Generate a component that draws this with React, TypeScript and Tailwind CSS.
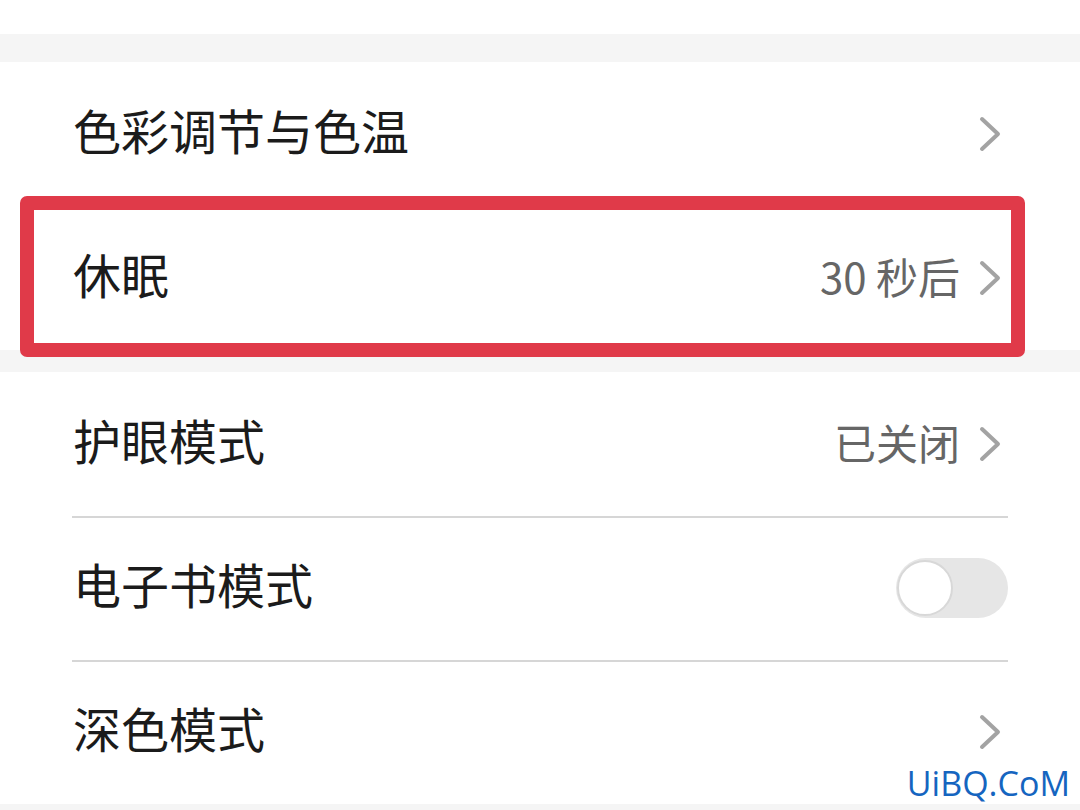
import React from 'react'

const font = { fontFamily: '"Noto Sans CJK SC", "Noto Sans", sans-serif' }

const Chevron = () => (
    <svg width="24" height="36" viewBox="0 0 24 36" fill="none" className="shrink-0">
        <path d="M4 3 L20 18 L4 33" stroke="#a3a3a3" strokeWidth="4" strokeLinecap="round" strokeLinejoin="round" />
    </svg>
)

type RowProps = {
    label: string
    value?: string
    chevron?: boolean
    toggle?: boolean
    divider?: boolean
    children?: React.ReactNode
}

const Row = ({ label, value, chevron, toggle, divider, children }: RowProps) => (
    <div className="relative h-[144px] flex items-center pl-[73px] pr-[72px]">
        {divider && <div className="absolute top-0 left-[72px] right-[72px] h-[2px] bg-[#d6d6d6]" />}
        <span className="text-[48px] leading-none text-[#1b1b1b] pb-[10px]">{label}</span>
        <div className="ml-auto flex items-center gap-[18px]">
            {value && <span className="text-[42px] leading-none text-[#666666] pb-[4px]">{value}</span>}
            {chevron && <div className="mr-[6px]"><Chevron /></div>}
            {toggle && (
                <div className="w-[112px] h-[60px] rounded-full bg-[#e6e6e6] flex items-center">
                    <div className="w-[56px] h-[56px] rounded-full bg-white border-2 border-[#d8d8d8] ml-[1px]" />
                </div>
            )}
        </div>
        {children}
    </div>
)

export default function App() {
    return (
        <div className="relative w-[1080px] h-[810px] bg-white overflow-hidden" style={font}>
            <div className="h-[34px] bg-white" />
            <div className="h-[28px] bg-[#f5f5f5]" />
            <div className="bg-white">
                <Row label="色彩调节与色温" chevron />
                <Row label="休眠" value="30 秒后" chevron>
                    <div className="absolute left-[20px] right-[55px] top-[-10px] bottom-[-7px] border-[14px] border-[#e03a49] rounded-[7px] z-10" />
                </Row>
            </div>
            <div className="h-[22px] bg-[#f5f5f5]" />
            <div className="bg-white">
                <Row label="护眼模式" value="已关闭" chevron />
                <Row label="电子书模式" toggle divider />
                <Row label="深色模式" chevron divider />
            </div>
            <div className="h-[10px] bg-[#f5f5f5]" />
            <div
                className="absolute right-[10px] bottom-[10px] text-[34px] leading-none text-[#1565c0]"
                style={{ fontFamily: '"Open Sans", "DejaVu Sans", sans-serif' }}
            >
                UiBQ.CoM
            </div>
        </div>
    )
}
